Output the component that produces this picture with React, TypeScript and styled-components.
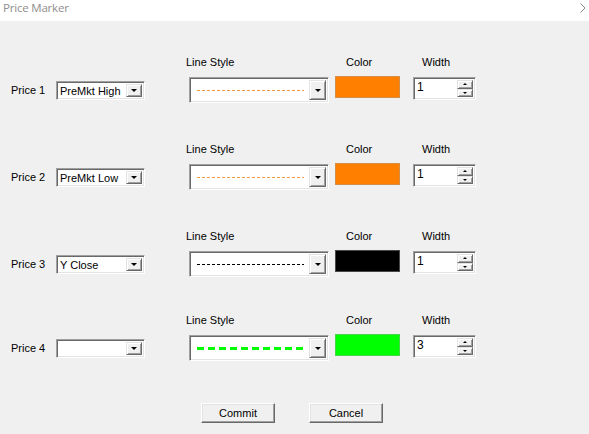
import React from "react";
import styled, { createGlobalStyle } from "styled-components";

const Global = createGlobalStyle`
  html, body { margin: 0; padding: 0; background: #f0f0f0; }
  body { font-family: "Liberation Sans", Arial, sans-serif; font-size: 11px; color: #000; }
`;

const Window = styled.div`
  width: 589px;
  height: 434px;
  display: flex;
  flex-direction: column;
  background: #f0f0f0;
  overflow: hidden;
`;

const TitleBar = styled.div`
  height: 21px;
  flex: none;
  box-sizing: border-box;
  background: #fff;
  display: flex;
  align-items: flex-start;
  justify-content: space-between;
  padding: 0 3px 0 3px;
`;

const TitleText = styled.span`
  font-family: "Open Sans", "Liberation Sans", sans-serif;
  font-size: 11.5px;
  letter-spacing: -0.2px;
  line-height: 16px;
  color: #8e8e8e;
`;

const Chevron = styled.svg`
  margin-top: 3px;
`;

const Content = styled.div`
  display: flex;
  flex-direction: column;
  padding-top: 35px;
`;

const RowBlock = styled.div<{ $mt: number }>`
  display: flex;
  flex-direction: column;
  margin-top: ${(p) => p.$mt}px;
`;

const HeaderRow = styled.div`
  display: grid;
  grid-template-columns: 160px 76px auto;
  padding-left: 186px;
  height: 13px;
  line-height: 13px;
`;

const ControlsRow = styled.div`
  display: flex;
  align-items: flex-start;
  margin-top: 8px;
  height: 26px;
`;

const PriceLabel = styled.div`
  width: 45px;
  padding-left: 11px;
  line-height: 26px;
`;

const Sunken = styled.div`
  box-sizing: border-box;
  background: #fff;
  border: 1px solid;
  border-color: #a0a0a0 #ffffff #ffffff #a0a0a0;
  box-shadow: inset 1px 1px 0 #696969, inset -1px -1px 0 #e3e3e3;
  display: flex;
  align-items: stretch;
`;

const PriceCombo = styled(Sunken)`
  width: 89px;
  height: 19px;
  margin-top: 4px;
  padding: 2px;
`;

const ComboText = styled.div`
  flex: 1;
  padding-left: 1px;
  line-height: 15px;
  white-space: nowrap;
  overflow: hidden;
`;

const DropButton = styled.div<{ $w: number }>`
  flex: none;
  width: ${(p) => p.$w}px;
  box-sizing: border-box;
  background: #f0f0f0;
  border: 1px solid;
  border-color: #e3e3e3 #696969 #696969 #e3e3e3;
  box-shadow: inset 1px 1px 0 #fff, inset -1px -1px 0 #a0a0a0;
  display: flex;
  align-items: center;
  justify-content: center;
`;

const Arrow = styled.div<{ $up?: boolean; $size: number }>`
  width: 0;
  height: 0;
  border-left: ${(p) => p.$size}px solid transparent;
  border-right: ${(p) => p.$size}px solid transparent;
  ${(p) =>
    p.$up
      ? `border-bottom: ${Math.ceil(p.$size / 1.5)}px solid #000;`
      : `border-top: ${Math.ceil(p.$size / 1.5)}px solid #000;`}
`;

const LineCombo = styled(Sunken)`
  width: 140px;
  height: 26px;
  margin-left: 44px;
  padding: 2px;
`;

const LineField = styled.div`
  flex: 1;
  display: flex;
  align-items: center;
  padding-left: 5px;
`;

const DashLine = styled.div<{ $color: string; $thick: boolean }>`
  width: 107px;
  height: ${(p) => (p.$thick ? 3 : 1)}px;
  margin-top: ${(p) => (p.$thick ? 1 : 0)}px;
  background: ${(p) =>
    p.$thick
      ? `repeating-linear-gradient(to right, ${p.$color} 0 7px, transparent 7px 11px)`
      : `repeating-linear-gradient(to right, ${p.$color} 0 3px, transparent 3px 5px)`};
`;

const Swatch = styled.div<{ $color: string }>`
  width: 65px;
  height: 22px;
  box-sizing: border-box;
  margin-left: 6px;
  margin-top: -1px;
  background: ${(p) => p.$color};
  border: 1px solid rgba(160, 160, 160, 0.45);
`;

const Spin = styled(Sunken)`
  width: 63px;
  height: 23px;
  margin-left: 13px;
  padding: 2px;
`;

const SpinText = styled.div`
  flex: 1;
  padding-left: 1px;
  font-size: 12px;
  line-height: 14px;
`;

const SpinButtons = styled.div`
  width: 16px;
  display: flex;
  flex-direction: column;
`;

const SpinButton = styled.div`
  flex: 1;
  box-sizing: border-box;
  background: #f0f0f0;
  border: 1px solid;
  border-color: #e3e3e3 #696969 #696969 #e3e3e3;
  box-shadow: inset 1px 1px 0 #fff, inset -1px -1px 0 #a0a0a0;
  display: flex;
  align-items: center;
  justify-content: center;
`;

const ButtonRow = styled.div`
  display: flex;
  justify-content: center;
  gap: 34px;
  margin-top: 42px;
  padding-right: 5px;
`;

const Button = styled.button`
  width: 74px;
  height: 20px;
  box-sizing: border-box;
  padding: 0;
  font-family: "Liberation Sans", Arial, sans-serif;
  font-size: 11px;
  color: #000;
  background: #f0f0f0;
  border: 1px solid;
  border-color: #fff #696969 #696969 #fff;
  box-shadow: inset -1px -1px 0 #a0a0a0, inset 1px 1px 0 #e3e3e3;
`;

type Row = {
  price: string;
  value: string;
  mt: number;
  color: string;
  lineColor: string;
  thick: boolean;
  width: string;
};

const rows: Row[] = [
  { price: "Price 1", value: "PreMkt High", mt: 0, color: "#ff8000", lineColor: "#f29a3e", thick: false, width: "1" },
  { price: "Price 2", value: "PreMkt Low", mt: 40, color: "#ff8000", lineColor: "#f29a3e", thick: false, width: "1" },
  { price: "Price 3", value: "Y Close", mt: 40, color: "#000000", lineColor: "#000000", thick: false, width: "1" },
  { price: "Price 4", value: "", mt: 37, color: "#00ff00", lineColor: "#00ff00", thick: true, width: "3" },
];

export default function App() {
  return (
    <Window>
      <Global />
      <TitleBar>
        <TitleText>Price Marker</TitleText>
        <Chevron width="6" height="10" viewBox="0 0 6 10">
          <polyline points="0.5,0.5 5,5 0.5,9.5" fill="none" stroke="#8a8a8a" strokeWidth="1" />
        </Chevron>
      </TitleBar>
      <Content>
        {rows.map((r) => (
          <RowBlock key={r.price} $mt={r.mt}>
            <HeaderRow>
              <span>Line Style</span>
              <span>Color</span>
              <span>Width</span>
            </HeaderRow>
            <ControlsRow>
              <PriceLabel>{r.price}</PriceLabel>
              <PriceCombo>
                <ComboText>{r.value}</ComboText>
                <DropButton $w={16}>
                  <Arrow $size={3.5} />
                </DropButton>
              </PriceCombo>
              <LineCombo>
                <LineField>
                  <DashLine $color={r.lineColor} $thick={r.thick} />
                </LineField>
                <DropButton $w={17}>
                  <Arrow $size={3.5} />
                </DropButton>
              </LineCombo>
              <Swatch $color={r.color} />
              <Spin>
                <SpinText>{r.width}</SpinText>
                <SpinButtons>
                  <SpinButton>
                    <Arrow $up $size={2} />
                  </SpinButton>
                  <SpinButton>
                    <Arrow $size={2} />
                  </SpinButton>
                </SpinButtons>
              </Spin>
            </ControlsRow>
          </RowBlock>
        ))}
      </Content>
      <ButtonRow>
        <Button>Commit</Button>
        <Button>Cancel</Button>
      </ButtonRow>
    </Window>
  );
}
